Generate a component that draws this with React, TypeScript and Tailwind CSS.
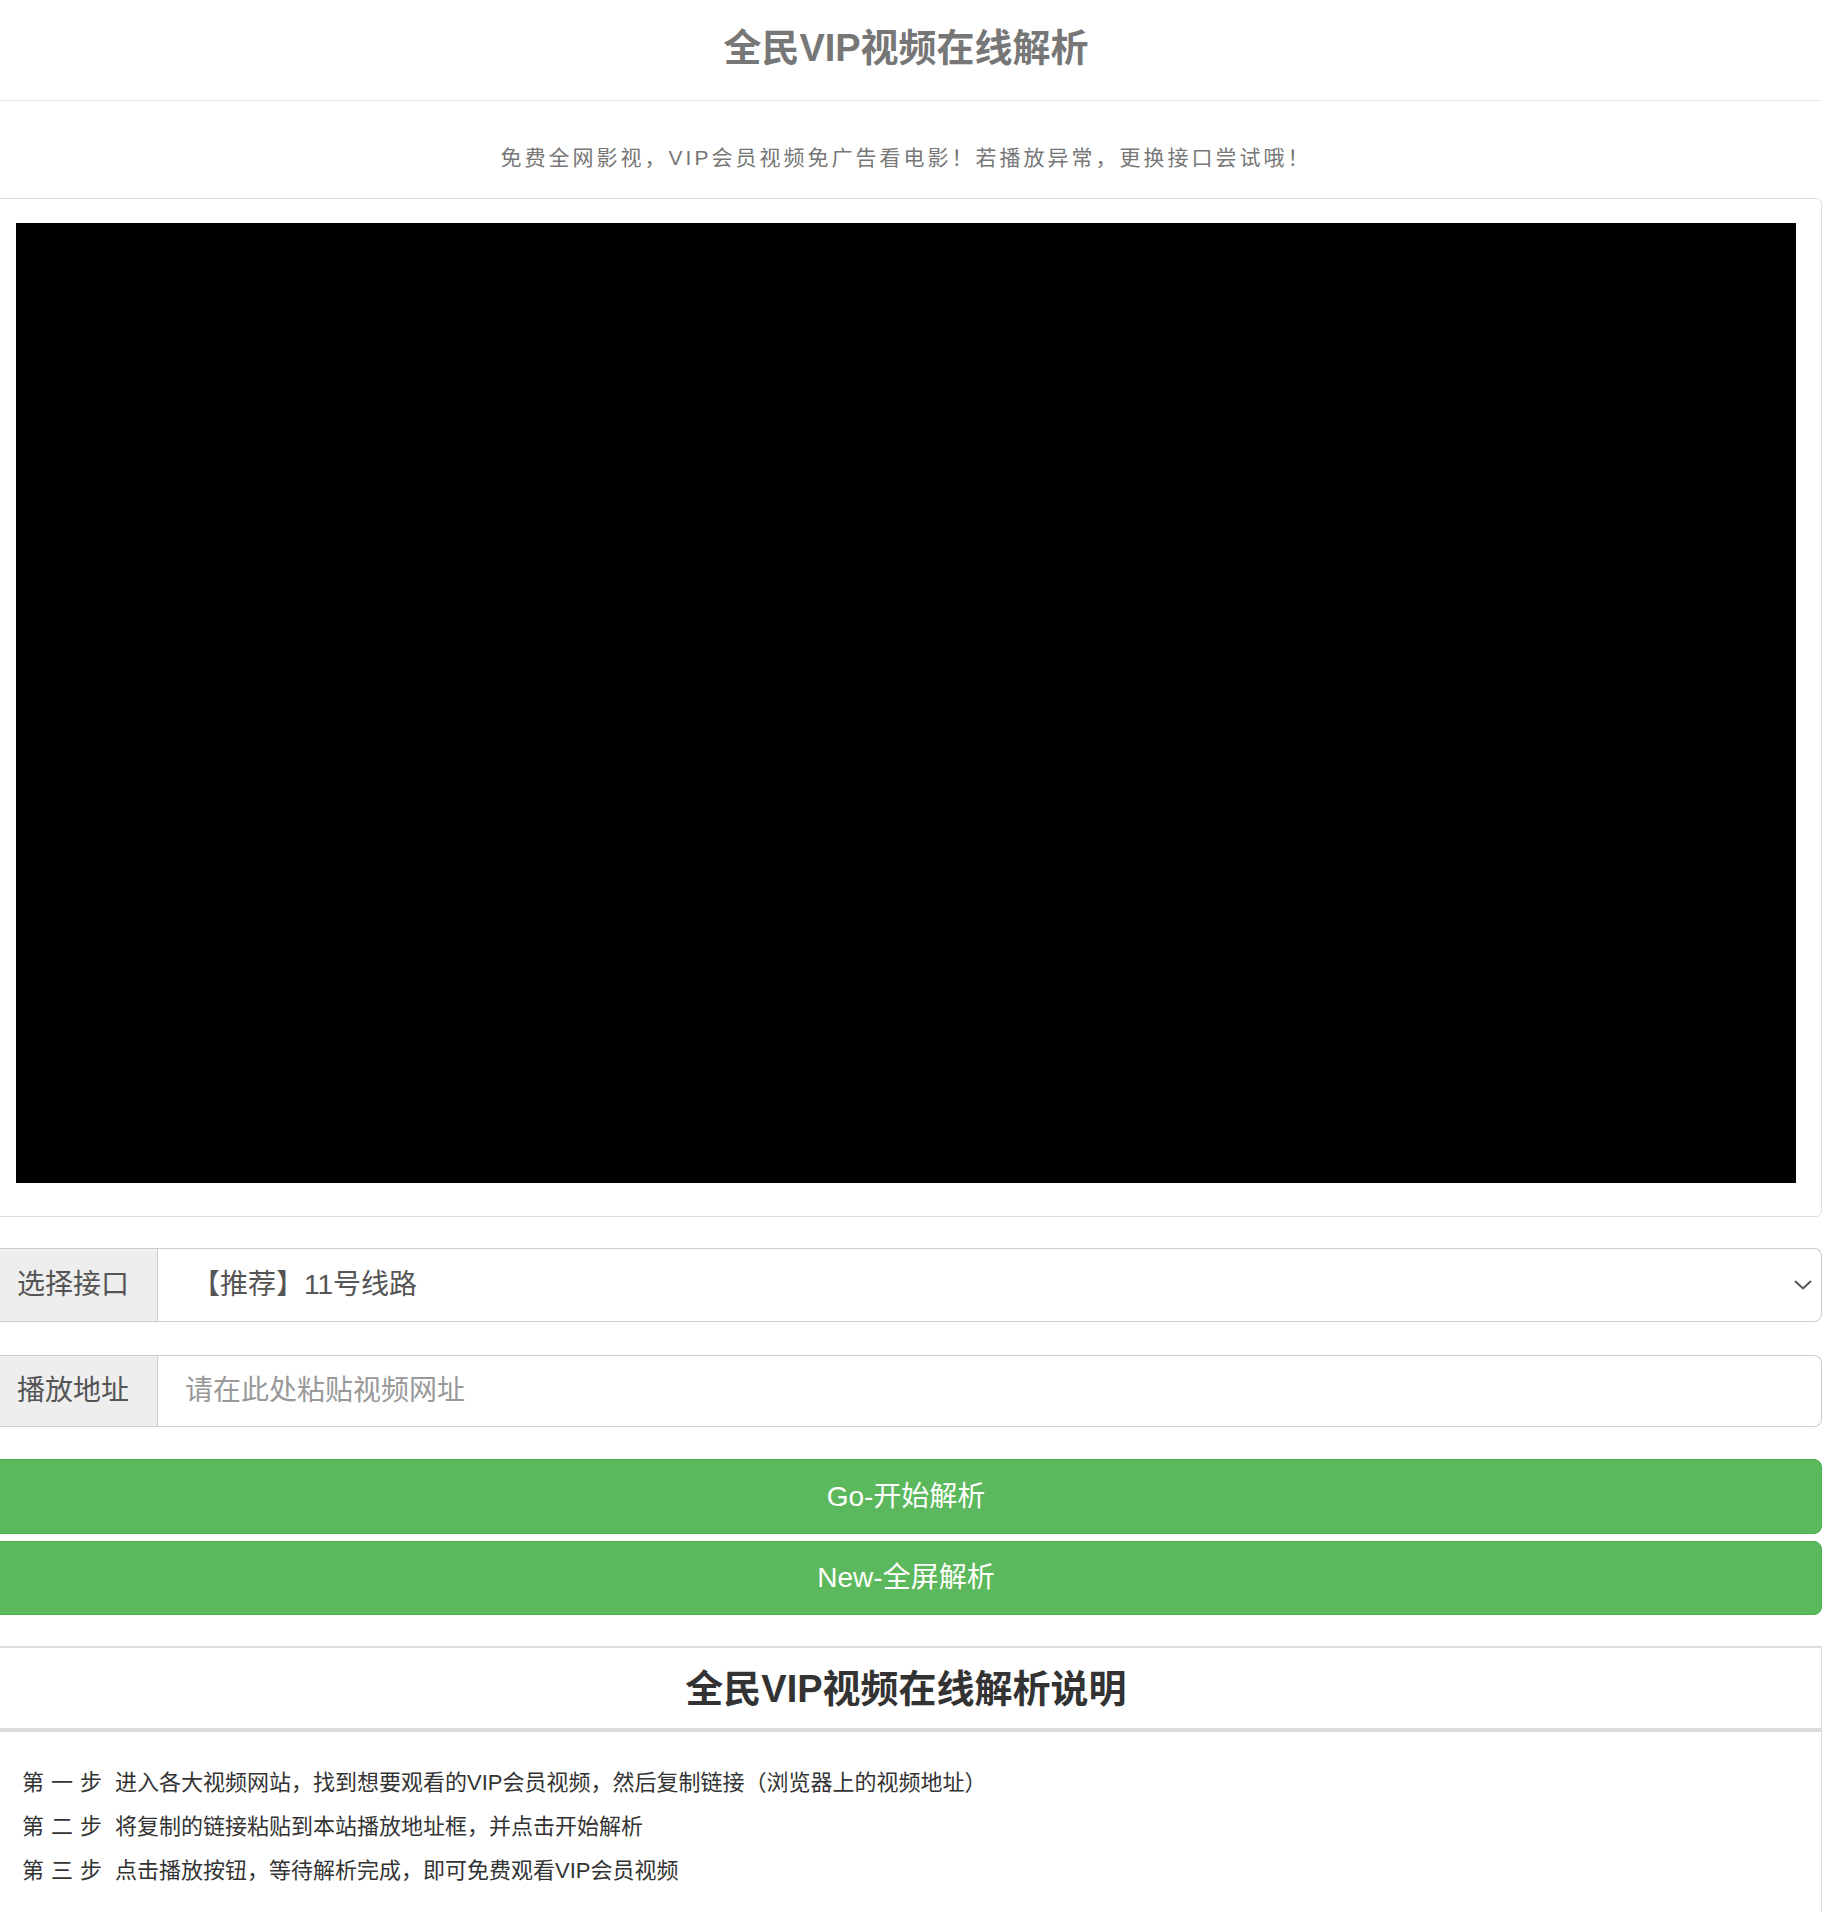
import { useState } from "react";

const lines = [
  { n: "一", text: "进入各大视频网站，找到想要观看的VIP会员视频，然后复制链接（浏览器上的视频地址）" },
  { n: "二", text: "将复制的链接粘贴到本站播放地址框，并点击开始解析" },
  { n: "三", text: "点击播放按钮，等待解析完成，即可免费观看VIP会员视频" },
];

export default function App() {
  const [url, setUrl] = useState("");

  return (
    <div className="h-[1912px] overflow-hidden bg-white">
      <div className="-ml-[10px] w-[1832px] font-['Liberation_Sans','Noto_Sans_CJK_SC',sans-serif]">
        {/* header */}
        <div className="flex h-[101px] items-center justify-center border-b border-[#e8e8e8] pb-[5px]">
          <h1 className="text-[38px] font-bold leading-[48px] text-[#777]">全民VIP视频在线解析</h1>
        </div>

        <p className="mt-[42px] mb-[25px] text-center text-[21px] leading-[30px] tracking-[3px] text-[#777]">
          免费全网影视，VIP会员视频免广告看电影！若播放异常，更换接口尝试哦！
        </p>

        {/* player */}
        <div className="rounded-[6px] border border-[#ddd] px-[25px] pt-[24px] pb-[33px]">
          <div className="h-[960px] w-full bg-black" />
        </div>

        {/* interface select */}
        <div className="mt-[31px] flex h-[74px] text-[28px] text-[#555]">
          <div className="flex w-[168px] items-center border border-[#ccc] bg-[#eee] pl-[26px]">选择接口</div>
          <div className="flex flex-1 items-center justify-between rounded-r-[8px] border-y border-r border-[#ccc] pl-[34px] pr-[9px]">
            <span>【推荐】11号线路</span>
            <svg width="18" height="10" viewBox="0 0 18 10" fill="none">
              <polyline points="1,1 9,8.5 17,1" stroke="#555" strokeWidth="2" />
            </svg>
          </div>
        </div>

        {/* url input */}
        <div className="mt-[33px] flex h-[72px] text-[28px] text-[#555]">
          <div className="flex w-[168px] items-center border border-[#ccc] bg-[#eee] pl-[26px]">播放地址</div>
          <input
            value={url}
            onChange={(e) => setUrl(e.target.value)}
            placeholder="请在此处粘贴视频网址"
            className="flex-1 rounded-r-[8px] border-y border-r border-[#ccc] pl-[27px] text-[28px] text-[#555] outline-none placeholder:text-[#999]"
          />
        </div>

        {/* buttons */}
        <button className="mt-[32px] flex h-[75px] w-full items-center justify-center rounded-[8px] border border-[#4cae4c] bg-[#5cb85c] text-[28px] text-white">
          Go-开始解析
        </button>
        <button className="mt-[7px] flex h-[74px] w-full items-center justify-center rounded-[8px] border border-[#4cae4c] bg-[#5cb85c] text-[28px] text-white">
          New-全屏解析
        </button>

        {/* description */}
        <div className="mt-[31px] border-x border-t-2 border-[#ddd] pb-[20px]">
          <div className="flex h-[84px] items-center justify-center border-b-4 border-[#ddd] pt-[2px]">
            <h2 className="text-[38px] font-bold leading-[48px] text-[#333]">全民VIP视频在线解析说明</h2>
          </div>
          <ul className="pt-[29px] pl-[31px] text-[22px] leading-[44px] text-[#333]">
            {lines.map((l) => (
              <li key={l.n}>
                <span className="mr-[7px]">第</span>
                <span className="mr-[7px]">{l.n}</span>
                <span className="mr-[13px]">步</span>
                {l.text}
              </li>
            ))}
          </ul>
        </div>
      </div>
    </div>
  );
}
